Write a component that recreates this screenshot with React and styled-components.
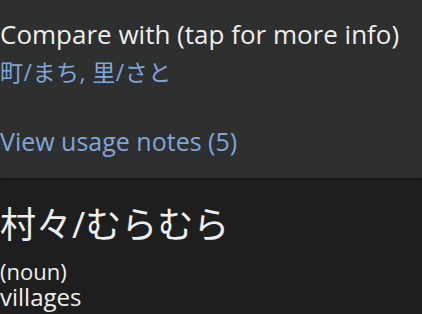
import React from 'react'
import styled, { createGlobalStyle } from 'styled-components'

const GlobalStyle = createGlobalStyle`
  html, body {
    margin: 0;
    padding: 0;
    background: #1e1e1e;
  }
  body {
    font-family: 'Open Sans', 'Noto Sans CJK JP', sans-serif;
    overflow: hidden;
  }
`

const Screen = styled.div`
  display: flex;
  flex-direction: column;
  width: 422px;
  height: 314px;
  overflow: hidden;
`

const InfoPanel = styled.section`
  display: flex;
  flex-direction: column;
  height: 178px;
  box-sizing: border-box;
  padding-top: 16px;
  background: #2e2f2f;
  box-shadow: 0 1px 2px rgba(0, 0, 0, 0.35);
  position: relative;
  z-index: 1;
`

const Heading = styled.div`
  font-size: 26px;
  line-height: 36px;
  color: #eeeeee;
  white-space: nowrap;
`

const LinkText = styled.div`
  font-size: ${({size}) => size}px;
  line-height: ${({lh}) => lh}px;
  margin-top: ${({gap}) => gap || 0}px;
  letter-spacing: ${({spacing}) => spacing || 0}px;
  color: #7ea6da;
  white-space: nowrap;
`

const EntryPanel = styled.section`
  flex: 1;
  display: flex;
  flex-direction: column;
  padding-top: 23px;
  background: #1e1e1e;
`

const Headword = styled.div`
  font-size: 36px;
  line-height: 48px;
  color: #eeeeee;
  white-space: nowrap;
`

const Sense = styled.div`
  font-size: ${({size}) => size}px;
  line-height: ${({lh}) => lh}px;
  margin-top: ${({gap}) => gap || 0}px;
  color: #eeeeee;
  white-space: nowrap;
`

const App = () => {
  return (
    <Screen>
      <GlobalStyle />
      <InfoPanel>
        <Heading>Compare with (tap for more info)</Heading>
        <LinkText size={23} lh={40} spacing={0.5}>町/まち, 里/さと</LinkText>
        <LinkText size={25} lh={34} gap={32}>View usage notes (5)</LinkText>
      </InfoPanel>
      <EntryPanel>
        <Headword>村々/むらむら</Headword>
        <Sense size={22} lh={22} gap={11}>(noun)</Sense>
        <Sense size={24} lh={26} gap={2}>villages</Sense>
      </EntryPanel>
    </Screen>
  )
}

export default App
